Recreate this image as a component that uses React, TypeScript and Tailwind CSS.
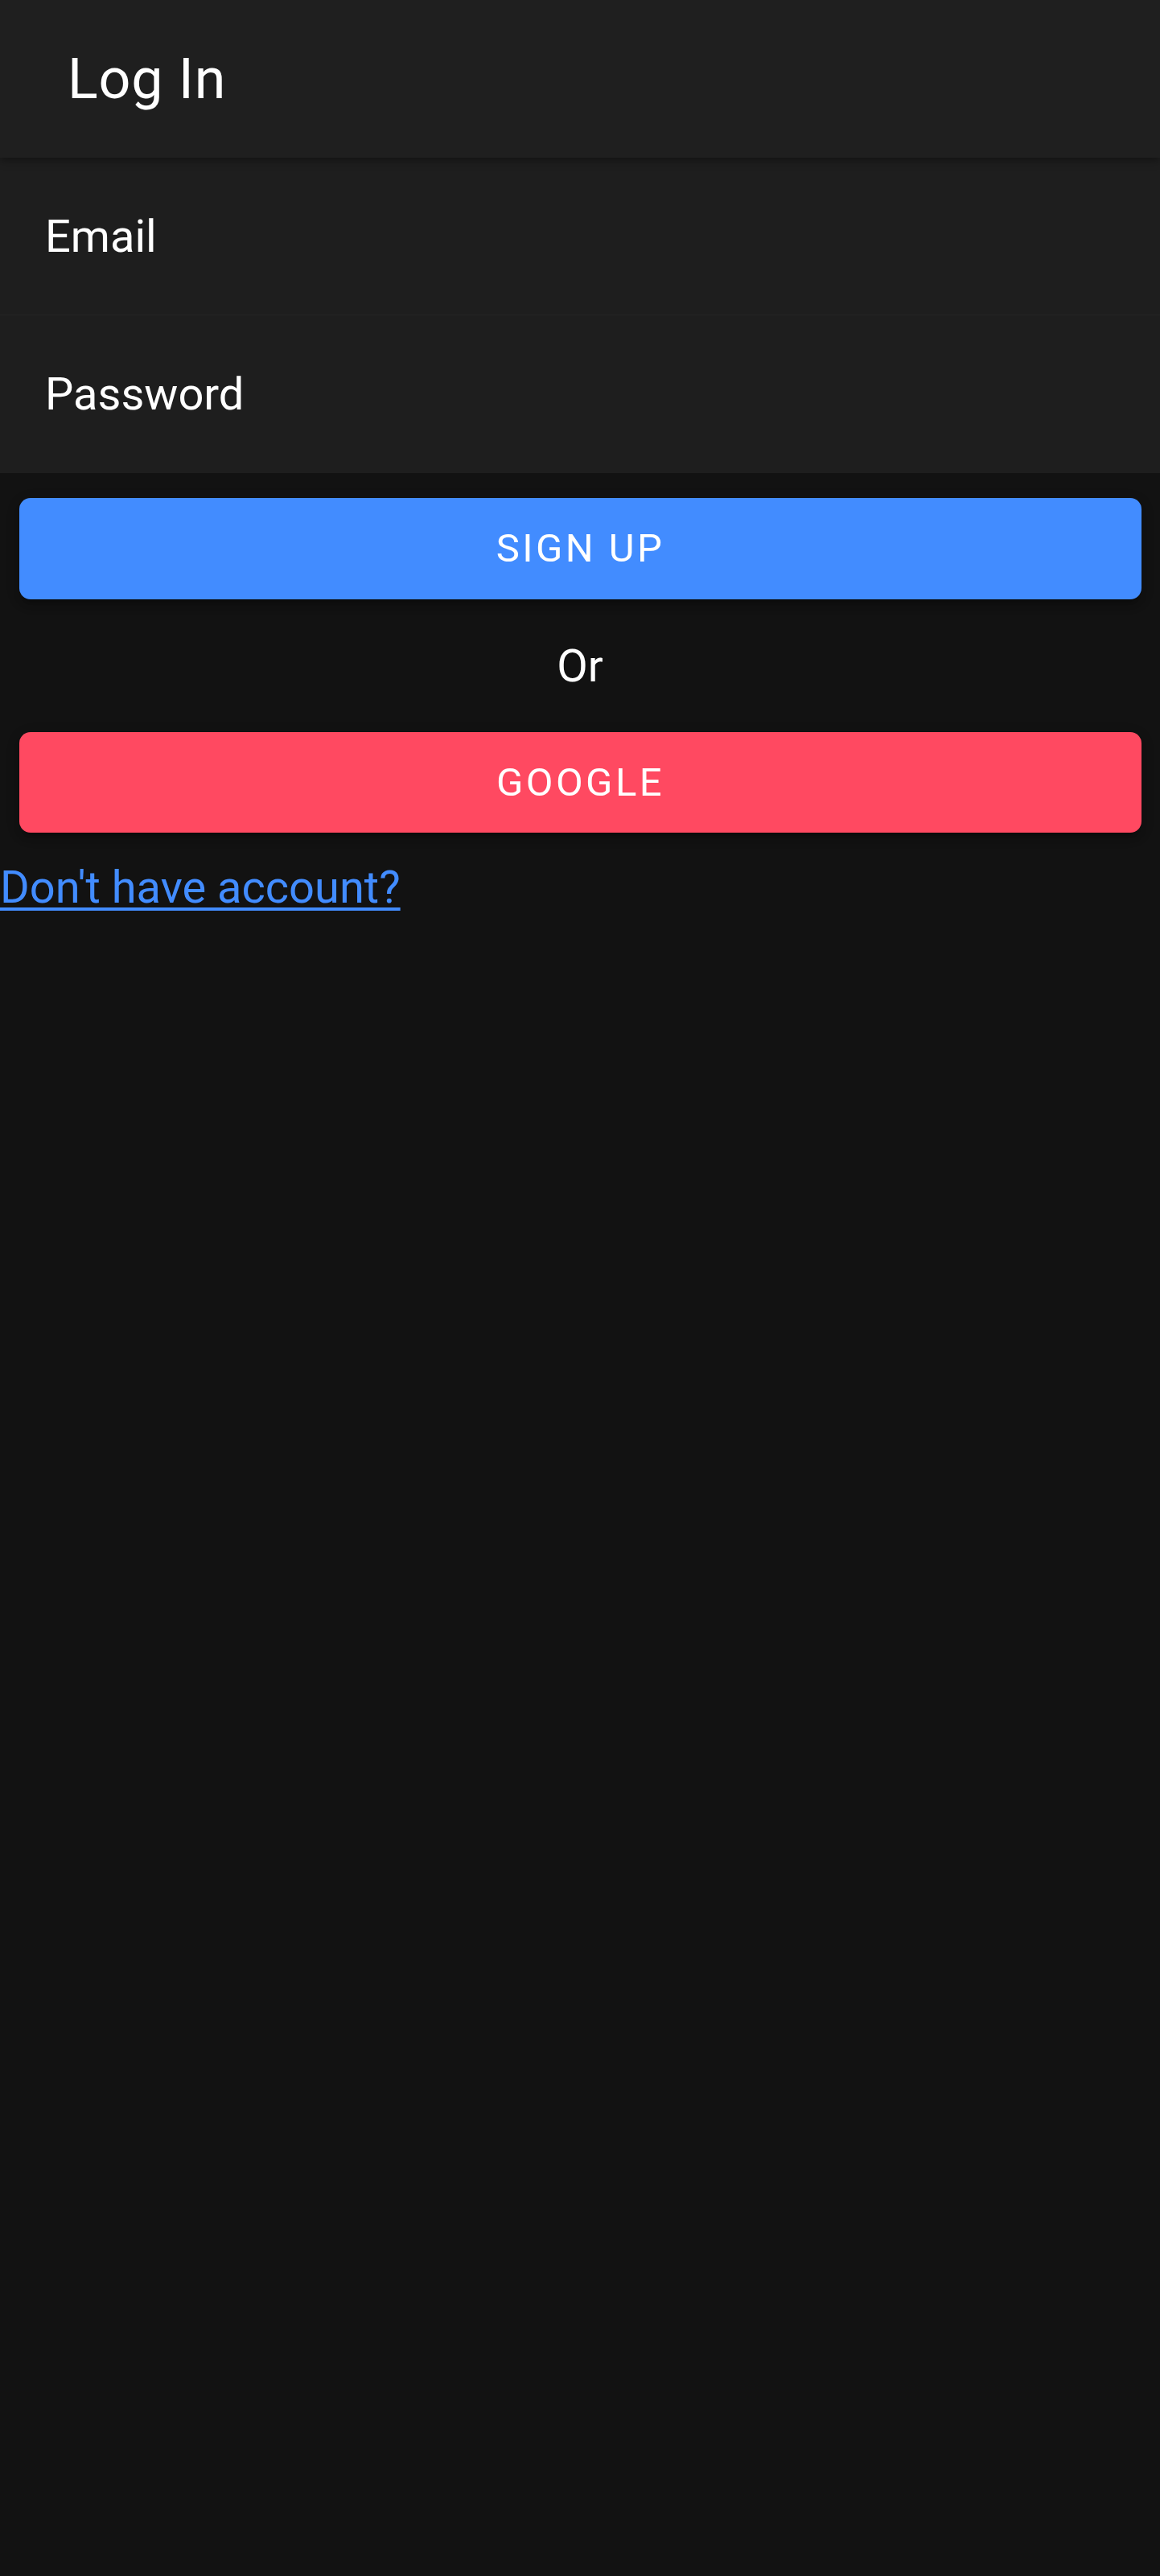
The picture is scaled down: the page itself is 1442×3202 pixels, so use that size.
import React from "react";

/* ── Campos do formulário ── */
const FIELDS = ["Email", "Password"];

const BUTTON_SHADOW =
  "shadow-[0_10px_4px_-7px_rgba(0,0,0,0.2),0_7px_7px_0_rgba(0,0,0,0.14),0_4px_18px_0_rgba(0,0,0,0.12)]";

export default function App() {
  return (
    <div className="min-h-[3202px] w-full bg-[#121212] text-white font-['Roboto',_'Noto_Sans',_sans-serif]">
      {/* ── Toolbar ── */}
      <header className="relative z-10 flex h-[196px] items-center bg-[#1f1f1f] pl-[84px] shadow-[0_4px_10px_rgba(0,0,0,0.35)]">
        <h1 className="text-[70px] font-normal leading-none tracking-[0.0125em]">Log In</h1>
      </header>

      {/* ── Inputs ── */}
      <div>
        {FIELDS.map((label, i) => (
          <label
            key={label}
            className={
              "flex h-[196px] items-center bg-[#1e1e1e] px-[56px] " +
              (i === 0 ? "border-b border-[#242424]" : "")
            }
          >
            <input
              type={label === "Password" ? "password" : "email"}
              placeholder={label}
              className="w-full bg-transparent text-[56px] leading-none text-white placeholder:text-white outline-none"
            />
          </label>
        ))}
      </div>

      {/* ── Ações ── */}
      <div className="pt-[31px]">
        <button
          className={`mx-[24px] flex h-[126px] w-[calc(100%-47px)] items-center justify-center rounded-[14px] bg-[#428cff] text-[49px] font-normal uppercase tracking-[0.07em] text-white ${BUTTON_SHADOW}`}
        >
          Sign up
        </button>

        <div className="flex h-[165px] items-center justify-center text-[56px] leading-none">Or</div>

        <button
          className={`mx-[24px] flex h-[125px] w-[calc(100%-47px)] items-center justify-center rounded-[14px] bg-[#ff4961] text-[49px] font-normal uppercase tracking-[0.07em] text-white ${BUTTON_SHADOW}`}
        >
          Google
        </button>

        <a
          href="#"
          className="mt-[26px] inline-block text-[56px] text-[#428cff] underline decoration-[4px] underline-offset-[6px]"
        >
          Don't have account?
        </a>
      </div>
    </div>
  );
}
